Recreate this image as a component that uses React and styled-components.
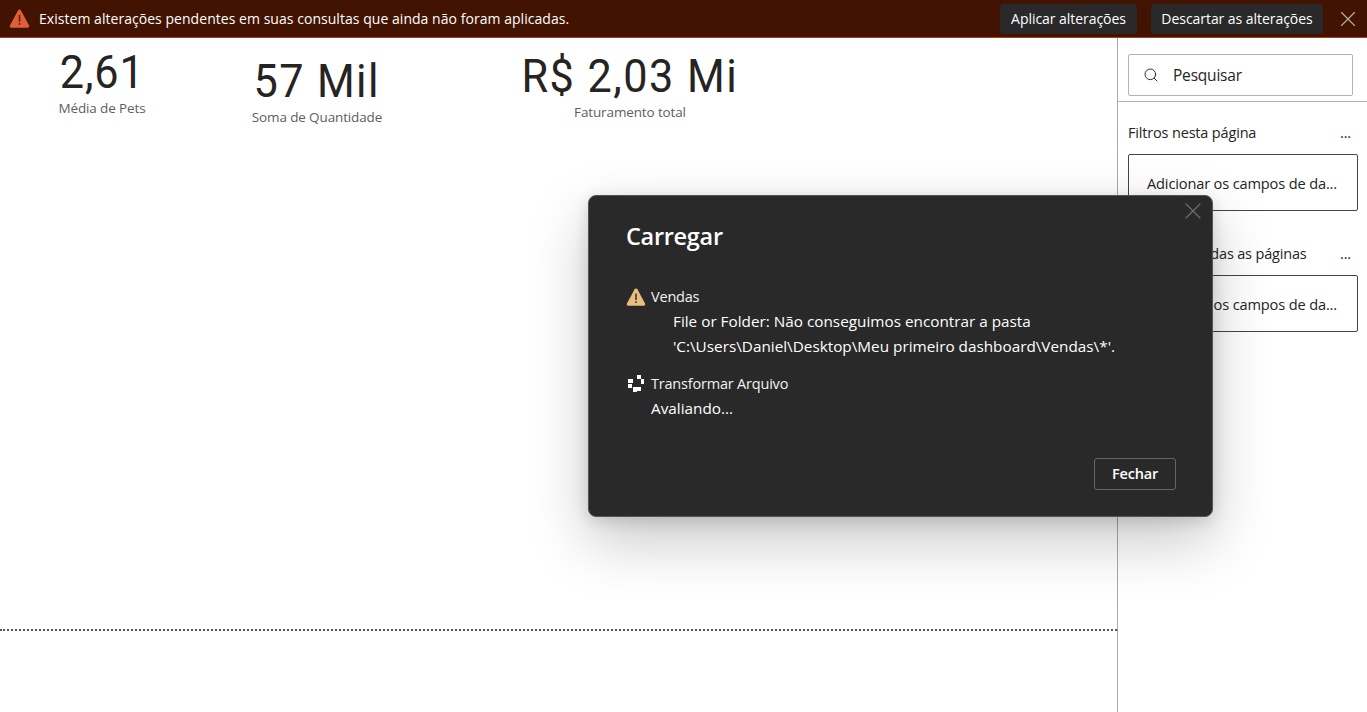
import styled, { createGlobalStyle } from "styled-components";
import { Search, X } from "lucide-react";

const GlobalStyle = createGlobalStyle`
  html, body {
    margin: 0;
    padding: 0;
    height: 100%;
    background: #fff;
    overflow: hidden;
  }
  body {
    font-family: "Open Sans", "Noto Sans", sans-serif;
  }
`;

const Page = styled.div`
  position: relative;
  width: 1367px;
  height: 712px;
  display: flex;
  flex-direction: column;
  overflow: hidden;
`;

const Banner = styled.div`
  height: 37px;
  flex: none;
  display: flex;
  align-items: center;
  background: #421300;
  border-bottom: 1px solid #a8400f;
  padding: 0 6px 0 9px;
  color: #fff;
`;

const BannerText = styled.span`
  margin-left: 9px;
  padding-bottom: 1px;
  flex: 1;
  font-size: 14px;
  letter-spacing: 0.04px;
`;

const BannerButton = styled.button`
  width: ${(p) => p.$width}px;
  height: 30px;
  margin-left: ${(p) => p.$gap}px;
  padding: 0;
  border: none;
  border-radius: 4px;
  background: #292929;
  color: #fff;
  font-family: inherit;
  font-size: 14px;
  letter-spacing: -0.05px;
`;

const BannerClose = styled.button`
  display: flex;
  margin-left: 12px;
  padding: 0;
  border: none;
  background: none;
  color: #bcaea8;
`;

const Main = styled.div`
  flex: 1;
  display: flex;
  min-height: 0;
`;

const Canvas = styled.div`
  width: 1117px;
  flex: none;
  display: flex;
  flex-direction: column;
`;

const KpiRow = styled.div`
  height: 591px;
  flex: none;
  display: flex;
  align-items: flex-start;
  border-bottom: 2px dotted #555;
`;

const Kpi = styled.div`
  width: ${(p) => p.$width}px;
  margin-left: ${(p) => p.$left}px;
  margin-top: ${(p) => p.$top}px;
  display: flex;
  flex-direction: column;
  align-items: center;
`;

const KpiValue = styled.div`
  font-family: "Roboto", sans-serif;
  font-size: 47px;
  line-height: 55px;
  color: #252423;
  letter-spacing: ${(p) => p.$spacing}px;
  white-space: nowrap;
  transform: scaleX(0.92);
`;

const KpiLabel = styled.div`
  font-size: 13.5px;
  line-height: 18px;
  letter-spacing: -0.13px;
  color: #605e5c;
  white-space: nowrap;
`;

const Panel = styled.aside`
  flex: 1;
  border-left: 1px solid #aaa;
  display: flex;
  flex-direction: column;
`;

const SearchArea = styled.div`
  height: 64px;
  flex: none;
  box-sizing: border-box;
  padding: 16px 14px 0 10px;
  border-bottom: 1px solid #b3b3b3;
`;

const SearchBox = styled.div`
  height: 42px;
  box-sizing: border-box;
  display: flex;
  align-items: center;
  gap: 14px;
  padding-left: 14px;
  border: 1px solid #b3b3b3;
  border-radius: 2px;
  font-size: 15.5px;
  letter-spacing: -0.2px;
  color: #252423;
`;

const FilterSection = styled.section`
  padding: ${(p) => p.$top}px 9px 0 10px;
`;

const FilterHeader = styled.div`
  display: flex;
  justify-content: space-between;
  padding-right: 7px;
  font-size: 14.5px;
  line-height: 20px;
  letter-spacing: -0.17px;
  color: #252423;
  white-space: nowrap;
`;

const FilterCard = styled.div`
  margin-top: 11px;
  height: 57px;
  box-sizing: border-box;
  display: flex;
  align-items: center;
  padding-left: 18px;
  border: 1px solid #444;
  border-radius: 2px;
  font-size: 14.6px;
  letter-spacing: -0.15px;
  color: #252423;
  white-space: nowrap;
`;

const Dialog = styled.div`
  position: absolute;
  left: 588px;
  top: 195px;
  width: 625px;
  height: 322px;
  box-sizing: border-box;
  padding: 23px 36px 0 37px;
  display: flex;
  flex-direction: column;
  background: #292929;
  border: 1px solid #555;
  border-radius: 8px;
  color: #fff;
  box-shadow: 0 24px 60px rgba(0, 0, 0, 0.22), 0 4px 16px rgba(0, 0, 0, 0.14);
`;

const DialogClose = styled.button`
  position: absolute;
  right: 5px;
  top: 1px;
  display: flex;
  padding: 0;
  border: none;
  background: none;
  color: #6d6d6d;
`;

const DialogTitle = styled.h2`
  margin: 0;
  font-size: 23.5px;
  line-height: 34px;
  font-weight: 600;
  letter-spacing: -0.3px;
`;

const QueryRow = styled.div`
  display: flex;
  align-items: center;
  gap: 5px;
  margin-top: ${(p) => p.$top}px;
  font-size: 14.5px;
  line-height: 25px;
  letter-spacing: -0.2px;
  color: #f2f2f2;
`;

const StatusText = styled.div`
  margin-left: ${(p) => p.$indent}px;
  font-size: 15.3px;
  line-height: 25px;
  white-space: nowrap;
`;

const DialogFooter = styled.div`
  margin-top: auto;
  padding-bottom: 26px;
  display: flex;
  justify-content: flex-end;
`;

const CloseButton = styled.button`
  width: 82px;
  height: 32px;
  padding: 0 0 2px;
  border: 1px solid #666;
  border-radius: 3px;
  background: transparent;
  color: #fff;
  font-family: inherit;
  font-size: 14.5px;
  font-weight: 600;
  letter-spacing: -0.2px;
`;

function WarnIcon({ size, fill, mark }) {
  return (
    <svg width={size} height={size} viewBox="0 0 20 20" aria-hidden="true">
      <path
        d="M10 1.5c.6 0 1.1.3 1.4.8l7.7 14.3c.5 1-.2 2.2-1.4 2.2H2.3c-1.2 0-1.9-1.2-1.4-2.2L8.6 2.3c.3-.5.8-.8 1.4-.8z"
        fill={fill}
      />
      <rect x="9.2" y="6.5" width="1.6" height="6.5" fill={mark} />
      <rect x="9.2" y="14.2" width="1.6" height="1.8" fill={mark} />
    </svg>
  );
}

function Spinner() {
  return (
    <svg width="20" height="20" viewBox="0 0 20 20" aria-hidden="true">
      <g fill="#fff">
        <rect x="11" y="1" width="4" height="4" />
        <rect x="2" y="5" width="5" height="4" />
        <rect x="15" y="5" width="3" height="5" />
        <rect x="2" y="10" width="4" height="4" />
        <rect x="7" y="13" width="4" height="5" />
        <rect x="11" y="13" width="4" height="4" />
      </g>
    </svg>
  );
}

export default function App() {
  return (
    <Page>
      <GlobalStyle />
      <Banner>
        <WarnIcon size={21} fill="#e25f34" mark="#5c2410" />
        <BannerText>
          Existem alterações pendentes em suas consultas que ainda não foram
          aplicadas.
        </BannerText>
        <BannerButton $width={137} $gap={0}>Aplicar alterações</BannerButton>
        <BannerButton $width={172} $gap={14}>Descartar as alterações</BannerButton>
        <BannerClose>
          <X size={26} strokeWidth={1} />
        </BannerClose>
      </Banner>
      <Main>
        <Canvas>
          <KpiRow>
            <Kpi $left={42} $width={120} $top={6}>
              <KpiValue $spacing={1}>2,61</KpiValue>
              <KpiLabel>Média de Pets</KpiLabel>
            </Kpi>
            <Kpi $left={65} $width={180} $top={15}>
              <KpiValue $spacing={1.5}>57 Mil</KpiValue>
              <KpiLabel>Soma de Quantidade</KpiLabel>
            </Kpi>
            <Kpi $left={93} $width={260} $top={10}>
              <KpiValue $spacing={1.6}>R$ 2,03 Mi</KpiValue>
              <KpiLabel>Faturamento total</KpiLabel>
            </Kpi>
          </KpiRow>
        </Canvas>
        <Panel>
          <SearchArea>
            <SearchBox>
              <Search size={16} strokeWidth={1.4} />
              Pesquisar
            </SearchBox>
          </SearchArea>
          <FilterSection $top={21}>
            <FilterHeader>
              <span>Filtros nesta página</span>
              <span>...</span>
            </FilterHeader>
            <FilterCard>Adicionar os campos de da...</FilterCard>
          </FilterSection>
          <FilterSection $top={33}>
            <FilterHeader>
              <span>Filtros em todas as páginas</span>
              <span>...</span>
            </FilterHeader>
            <FilterCard>Adicionar os campos de da...</FilterCard>
          </FilterSection>
        </Panel>
      </Main>
      <Dialog>
        <DialogClose>
          <X size={28} strokeWidth={1} />
        </DialogClose>
        <DialogTitle>Carregar</DialogTitle>
        <QueryRow $top={31}>
          <WarnIcon size={20} fill="#e7bd80" mark="#4a3a22" />
          Vendas
        </QueryRow>
        <StatusText $indent={47}>
          File or Folder: Não conseguimos encontrar a pasta
        </StatusText>
        <StatusText $indent={47}>
          'C:\Users\Daniel\Desktop\Meu primeiro dashboard\Vendas\*'.
        </StatusText>
        <QueryRow $top={12}>
          <Spinner />
          Transformar Arquivo
        </QueryRow>
        <StatusText $indent={25}>Avaliando...</StatusText>
        <DialogFooter>
          <CloseButton>Fechar</CloseButton>
        </DialogFooter>
      </Dialog>
    </Page>
  );
}
